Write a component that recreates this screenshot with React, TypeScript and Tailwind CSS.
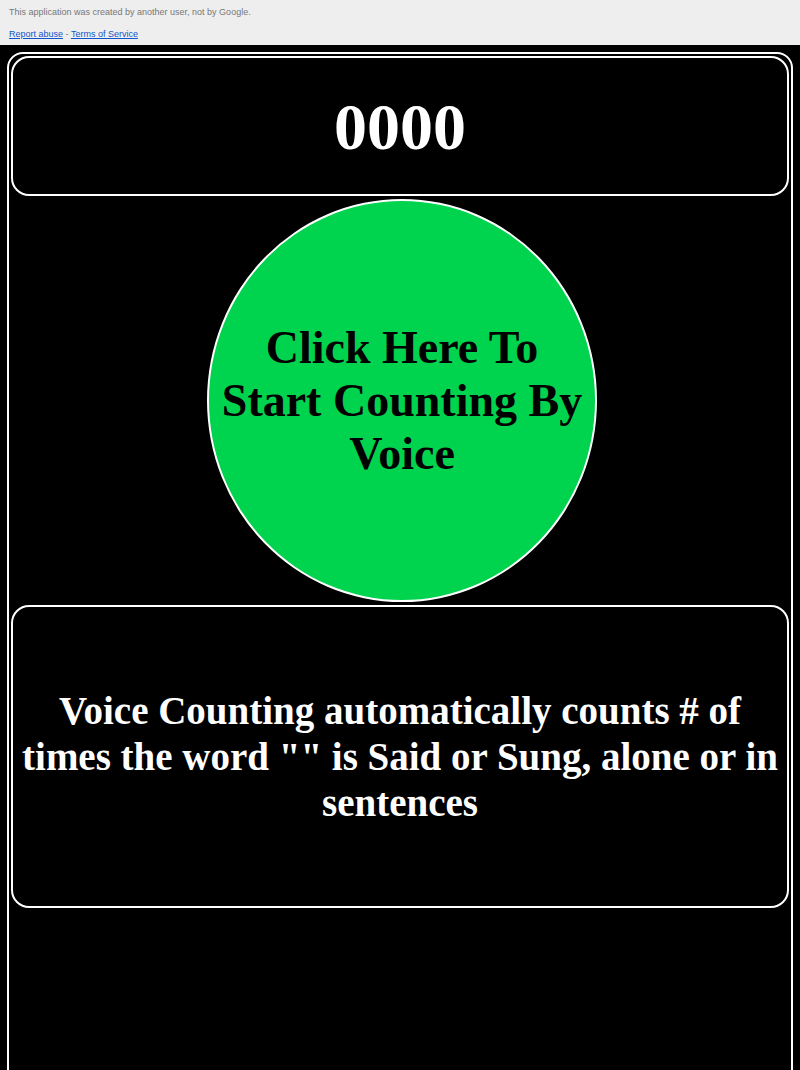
export default function App() {
  return (
    <div className="min-h-screen bg-black" style={{ fontFamily: '"Liberation Serif", serif' }}>
      <div className="h-[45px] bg-[#eeeeee] px-[9px] pt-[7px] text-[9px] leading-[11px]" style={{ fontFamily: '"Liberation Sans", Arial, sans-serif' }}>
        <div className="text-[#777777]">This application was created by another user, not by Google.</div>
        <div className="mt-[11px]">
          <a href="#" className="text-[#1155cc] underline">
            Report abuse
          </a>
          <span className="text-[#777777]"> - </span>
          <a href="#" className="text-[#1155cc] underline">
            Terms of Service
          </a>
        </div>
      </div>

      <div className="mx-[7px] mt-[7px] h-[1040px] rounded-[16px] border-2 border-white p-[2px]">
        <div className="flex h-[140px] items-center justify-center rounded-[18px] border-2 border-white">
          <span className="text-[66px] font-bold text-white">0000</span>
        </div>

        <div className="mt-[3px] flex justify-center pl-[4px]">
          <button
            type="button"
            className="flex h-[403px] w-[390px] items-center justify-center rounded-[50%] border-2 border-white bg-[#00d34d] px-2 text-[46px] font-bold leading-[53px] text-black"
          >
            Click Here To Start Counting By Voice
          </button>
        </div>

        <div className="mt-[3px] flex h-[303px] items-center justify-center rounded-[18px] border-2 border-white px-[5px] text-center text-[39px] font-bold leading-[46px] text-white">
          Voice Counting automatically counts # of times the word "" is Said or Sung, alone or in sentences
        </div>
      </div>
    </div>
  );
}
